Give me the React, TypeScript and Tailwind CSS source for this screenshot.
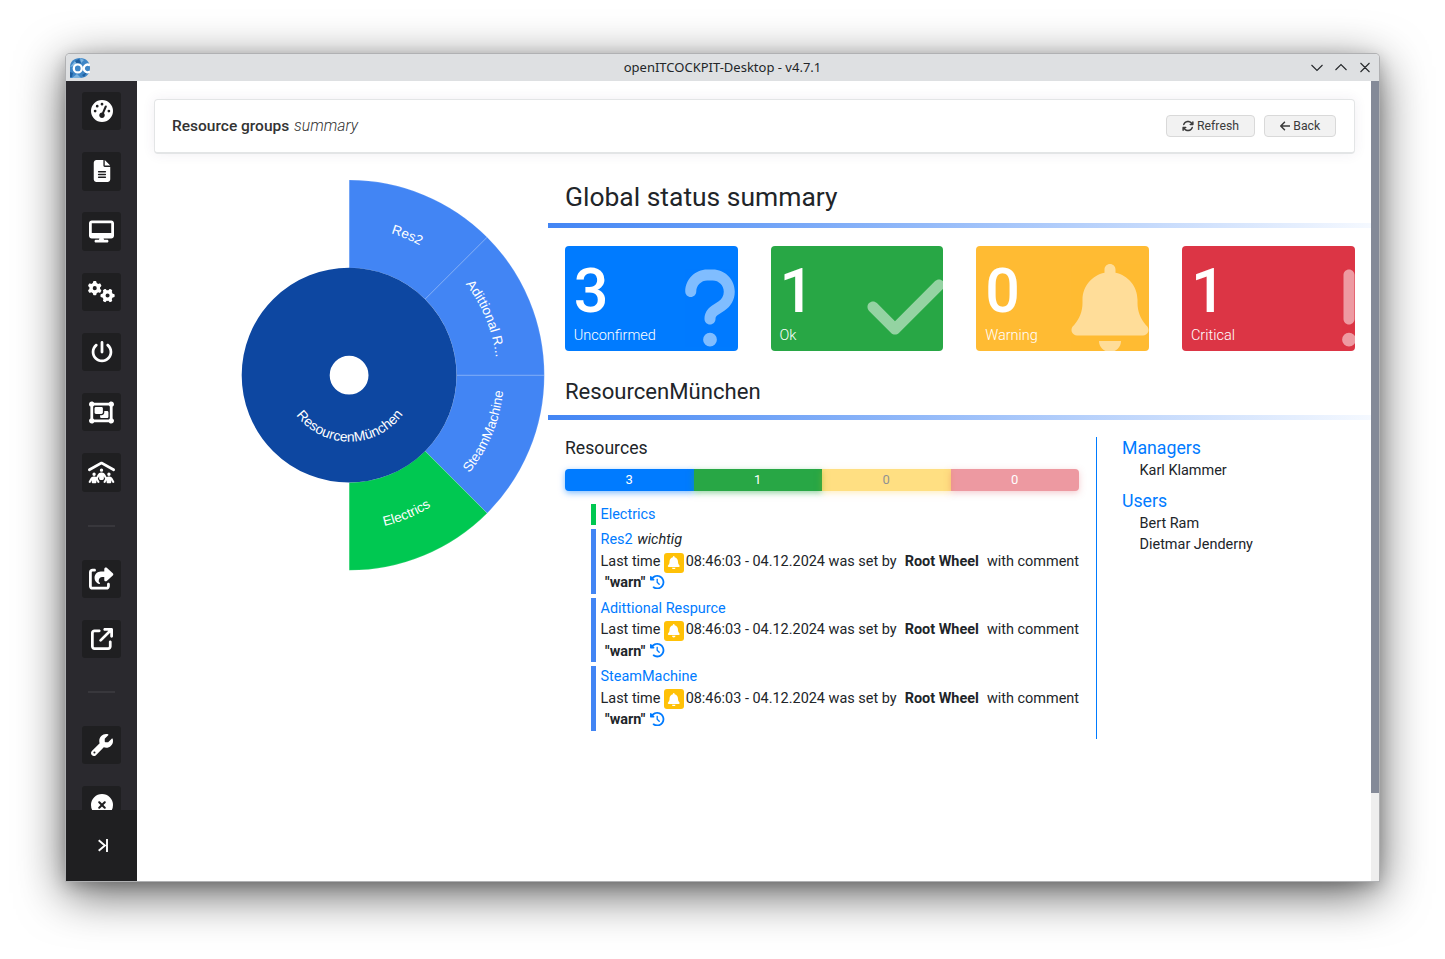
import type { ReactNode } from "react";
import type { IconType } from "react-icons";
import {
  FaArrowLeft,
  FaArrowsRotate,
  FaArrowUpRightFromSquare,
  FaBell,
  FaCheck,
  FaCircleXmark,
  FaClockRotateLeft,
  FaDesktop,
  FaExclamation,
  FaFileLines,
  FaGaugeHigh,
  FaGears,
  FaObjectGroup,
  FaPeopleRoof,
  FaPowerOff,
  FaQuestion,
  FaShareFromSquare,
  FaWrench,
} from "react-icons/fa6";

function Logo() {
  return (
    <svg className="h-5 w-5" viewBox="0 0 20 20">
      <path d="M0 20V9C0 3.500 4 0 10 0s10 4 10 10-4 10-10 10z" fill="#3f86c6" />
      <path d="M0 9 5 3l3 3-4 2zM10 0l4 2-3 3zM2 20l5-4 4 4z" fill="#7db4e0" />
      <path d="M5 3 9 1l2 4-4 1zM12 17l5-3-3 5zM0 14l3 1-1 4H0z" fill="#1f5f9f" />
      <circle cx="7.800" cy="10.400" r="4" fill="none" stroke="#fff" strokeWidth="2.300" />
      <path d="M20 7.400a3.800 3.800 0 1 0 0 6" fill="none" stroke="#fff" strokeWidth="2.300" />
    </svg>
  );
}

function TitleBar() {
  return (
    <header className="flex h-[27px] shrink-0 items-center bg-[#dee0e2] px-1">
      <div className="w-[68px]">
        <Logo />
      </div>
      <div className="flex-1 text-center font-['Noto_Sans',sans-serif] text-[13px] leading-none text-[#232629]">
        openITCOCKPIT-Desktop - v4.7.1
      </div>
      <svg className="h-5 w-[68px]" viewBox="0 0 68 20" fill="none" stroke="#232629" strokeWidth="1.100">
        <path d="M4.500 7 10 12.500l5.500-5.500M28.500 12 34 6.500l5.500 5.500M53.500 5l9 9M62.500 5l-9 9" />
      </svg>
    </header>
  );
}

function NavButton({ icon: Icon, size }: { icon: IconType; size: string }) {
  return (
    <div className="flex h-[38.450px] w-[39px] shrink-0 items-center justify-center rounded-[3px] bg-[#1f1f21] text-white">
      <Icon className={size} />
    </div>
  );
}

function Sidebar() {
  return (
    <nav className="flex w-[71px] shrink-0 flex-col bg-[#2a292e]">
      <div className="flex min-h-0 flex-1 flex-col items-center gap-[21.750px] overflow-hidden pt-[11px]">
        <NavButton icon={FaGaugeHigh} size="size-[22px]" />
        <NavButton icon={FaFileLines} size="size-[22px]" />
        <NavButton icon={FaDesktop} size="size-[25px]" />
        <NavButton icon={FaGears} size="size-[27px]" />
        <NavButton icon={FaPowerOff} size="size-[22px]" />
        <NavButton icon={FaObjectGroup} size="size-[25px]" />
        <NavButton icon={FaPeopleRoof} size="size-[27px]" />
        <div className="my-[11.350px] h-[2px] w-[27px] shrink-0 bg-[#38373c]" />
        <NavButton icon={FaShareFromSquare} size="size-[25px]" />
        <NavButton icon={FaArrowUpRightFromSquare} size="size-[22px]" />
        <div className="my-[11.050px] h-[2px] w-[27px] shrink-0 bg-[#38373c]" />
        <NavButton icon={FaWrench} size="size-[22px]" />
        <NavButton icon={FaCircleXmark} size="size-[22px]" />
      </div>
      <div className="flex h-[71px] shrink-0 items-center justify-center bg-[#1f1f21] pl-[3px]">
        <svg className="h-[14px] w-[12px]" viewBox="0 0 12 14" fill="none" stroke="#fff" strokeWidth="1.900">
          <path d="M1.700 1.200 7.900 6.500l-6.200 5.300M10 0v13" />
        </svg>
      </div>
    </nav>
  );
}

function HeaderButton({
  icon: Icon,
  iconSize,
  label,
  width,
}: {
  icon: IconType;
  iconSize: string;
  label: string;
  width: string;
}) {
  return (
    <button
      className={`flex h-[22px] items-center justify-center gap-[3px] rounded-[4px] border border-[#d9d9d9] bg-[#f2f2f2] text-[12.250px] leading-none text-[#3b3b3b] ${width}`}
    >
      <Icon className={iconSize} />
      {label}
    </button>
  );
}

const CX = 205.2;
const CY = 205.2;

function point(radius: number, degrees: number) {
  const a = (degrees * Math.PI) / 180;
  return `${(CX + radius * Math.sin(a)).toFixed(2)} ${(CY - radius * Math.cos(a)).toFixed(2)}`;
}

function wedge(from: number, to: number) {
  return `M${point(107.3, from)}L${point(195.1, from)}A195.1 195.1 0 0 1 ${point(195.1, to)}L${point(107.3, to)}A107.3 107.3 0 0 0 ${point(107.3, from)}Z`;
}

function Sunburst() {
  const slices = [
    { label: "Res2", from: 0, to: 45, color: "#4285f4", flip: false },
    { label: "Adittional R...", from: 45, to: 90, color: "#4285f4", flip: false },
    { label: "SteamMachine", from: 90, to: 135, color: "#4285f4", flip: true },
    { label: "Electrics", from: 135, to: 180, color: "#00c851", flip: true },
  ];
  return (
    <svg className="h-[410px] w-[410px]" viewBox="0 0 410 410">
      {slices.map((s, i) => (
        <g key={s.label}>
          <path d={wedge(s.from, s.to)} fill={s.color} stroke="#fff" strokeOpacity="0.2" strokeWidth="0.7" />
          <path
            id={`arc${i}`}
            fill="none"
            d={
              s.flip
                ? `M${point(154.8, s.to)}A154.8 154.8 0 0 0 ${point(154.8, s.from)}`
                : `M${point(147.8, s.from)}A147.8 147.8 0 0 1 ${point(147.8, s.to)}`
            }
          />
        </g>
      ))}
      <circle cx={CX - 0.1} cy={CY} r="63.4" fill="none" stroke="#0d47a1" strokeWidth="88" />
      <path id="arcRoot" fill="none" d={`M${point(66.5, 270)}A66.5 66.5 0 0 0 ${point(66.5, 90)}`} />
      <g className="font-['Liberation_Sans',sans-serif] text-[13.500px]" fill="#fff" textAnchor="middle">
        {slices.map((s, i) => (
          <text key={s.label}>
            <textPath href={`#arc${i}`} startOffset="50%">
              {s.label}
            </textPath>
          </text>
        ))}
        <text className="text-[13.850px]">
          <textPath href="#arcRoot" startOffset="50.300%">
            ResourcenMünchen
          </textPath>
        </text>
      </g>
    </svg>
  );
}

function StatusCard({
  count,
  label,
  color,
  children,
}: {
  count: number;
  label: string;
  color: string;
  children: ReactNode;
}) {
  return (
    <div className={`relative h-[105px] overflow-hidden rounded-[4px] text-white ${color}`}>
      <div className="pl-[8.900px] pt-[15px] text-[61px] font-medium leading-[61px]">{count}</div>
      <div className="pl-[8.900px] pt-[4px] text-[14.500px] font-light leading-[20px]">{label}</div>
      {children}
    </div>
  );
}

function GradientRule() {
  return <div className="h-[5px] bg-linear-to-r/srgb from-[#4285f4] to-[#f5f9ff]" />;
}

function Entry({ name, note, ok }: { name: string; note?: string; ok?: boolean }) {
  return (
    <li className={`border-l-[5px] pl-[4.500px] ${ok ? "border-[#00c851]" : "border-[#4285f4]"}`}>
      <div>
        <span className="text-[#007bff]">{name}</span>
        {note && <i className="ml-px"> {note}</i>}
      </div>
      {!ok && (
        <div className="whitespace-nowrap">
          Last time{" "}
          <span className="-my-1 inline-flex h-5 w-5 items-center justify-center rounded-[3px] bg-[#ffc107] align-[-3.500px] text-white">
            <FaBell className="size-[13.500px]" />
          </span>{" "}
          <span className="-ml-[2px]">08:46:03 - 04.12.2024 was set by</span>{" "}
          <b className="ml-[4.500px] mr-[4.500px] font-bold">Root Wheel</b> with comment
          <br />
          <b className="ml-[4.500px] font-bold">"warn"</b>{" "}
          <FaClockRotateLeft className="ml-[1.500px] inline size-[14.400px] align-[-2px] text-[#007bff]" />
        </div>
      )}
    </li>
  );
}

function Main() {
  return (
    <main className="min-w-0 flex-1 bg-white pt-[18px]">
      <div className="ml-[17px] mr-4 flex h-[55px] items-center rounded-[4px] border border-b-2 border-[#e3e5e6] pl-[17px] pr-[18px] shadow-[0_0_13px_rgba(74,53,107,0.08)]">
        <h1 className="flex-1 pb-px text-[15.500px] font-medium leading-6 text-[#333]">
          Resource groups <span className="ml-px text-[15.750px] font-light italic">summary</span>
        </h1>
        <div className="flex gap-[9px]">
          <HeaderButton icon={FaArrowsRotate} iconSize="size-3" label="Refresh" width="w-[89px]" />
          <HeaderButton icon={FaArrowLeft} iconSize="h-3 w-[10.500px]" label="Back" width="w-[72px]" />
        </div>
      </div>
      <div className="flex">
        <div className="w-[411px] shrink-0 pl-[7px] pt-4">
          <Sunburst />
        </div>
        <div className="min-w-0 flex-1">
          <h2 className="h-[69px] pl-[17px] pt-[27px] text-[26.450px] leading-[32px]">Global status summary</h2>
          <GradientRule />
          <div className="grid grid-cols-4 gap-[33px] pl-[16.800px] pr-[16.200px] pt-[18px]">
            <StatusCard count={3} label="Unconfirmed" color="bg-[#007bff]">
              <FaQuestion className="absolute -right-[16.600px] top-[17.500px] size-[88px] opacity-50" />
            </StatusCard>
            <StatusCard count={1} label="Ok" color="bg-[#28a745]">
              <FaCheck className="absolute -right-[6.500px] top-[17px] size-[88px] opacity-50" />
            </StatusCard>
            <StatusCard count={0} label="Warning" color="bg-[#ffbb33]">
              <FaBell className="absolute -right-[5.300px] top-[17.500px] size-[88px] opacity-50" />
            </StatusCard>
            <StatusCard count={1} label="Critical" color="bg-[#dc3545]">
              <FaExclamation className="absolute -right-[38.500px] top-[17.500px] size-[88px] opacity-50" />
            </StatusCard>
          </div>
          <h3 className="h-[64px] pl-[17px] pt-[26px] text-[22.100px] leading-[28px]">ResourcenMünchen</h3>
          <GradientRule />
          <div className="flex pt-[17px]">
            <section className="h-[302px] w-[549px] shrink-0 border-r border-[#007bff] pl-[17px] pr-[17px]">
              <h4 className="h-8 text-[17.650px] leading-[22px]">Resources</h4>
              <div className="flex h-[22px] text-center text-[13px] leading-[22px] text-white">
                <div className="flex-1 rounded-l-[4px] bg-[#007bff] shadow-[0_2px_6px_rgba(0,123,255,0.5)]">3</div>
                <div className="flex-1 bg-[#28a745] shadow-[0_2px_6px_rgba(40,167,69,0.5)]">1</div>
                <div className="flex-1 bg-[#ffc107] text-[#212529] opacity-50 shadow-[0_2px_6px_rgba(255,193,7,0.5)]">0</div>
                <div className="flex-1 rounded-r-[4px] bg-[#dc3545] opacity-50 shadow-[0_2px_6px_rgba(220,53,69,0.5)]">0</div>
              </div>
              <ul className="flex flex-col gap-[3.900px] pl-[26px] pt-[12.900px] text-[14.450px] leading-[21.500px]">
                <Entry name="Electrics" ok />
                <Entry name="Res2" note="wichtig" />
                <Entry name="Adittional Respurce" />
                <Entry name="SteamMachine" />
              </ul>
            </section>
            <section className="pl-[25px] text-[14.450px] leading-[21.400px]">
              <h4 className="text-[17.700px] leading-[22px] text-[#007bff]">Managers</h4>
              <p className="pl-[17.500px] pt-[0.500px]">Karl Klammer</p>
              <h4 className="pt-[9.500px] text-[17.700px] leading-[22px] text-[#007bff]">Users</h4>
              <p className="pl-[17.500px] pt-[0.400px]">Bert Ram</p>
              <p className="pl-[17.500px]">Dietmar Jenderny</p>
            </section>
          </div>
        </div>
      </div>
    </main>
  );
}

export default function App() {
  return (
    <div className="flex h-[959px] w-[1445px] overflow-hidden bg-white pl-[66px] pt-[54px] font-[Roboto,sans-serif] text-[#212529]">
      <div className="flex h-[827px] w-[1313px] flex-col rounded-t-[4px] shadow-[0_0_0_1px_#b0b1b3,0_12px_48px_rgba(0,0,0,0.65),0_4px_16px_rgba(0,0,0,0.2)]">
        <div className="flex min-h-0 flex-1 flex-col overflow-hidden rounded-t-[4px]">
          <TitleBar />
          <div className="flex min-h-0 flex-1">
            <Sidebar />
            <Main />
            <div className="w-2 shrink-0 bg-[#eee]">
              <div className="h-[712px] bg-[#848a98]" />
            </div>
          </div>
        </div>
      </div>
    </div>
  );
}
